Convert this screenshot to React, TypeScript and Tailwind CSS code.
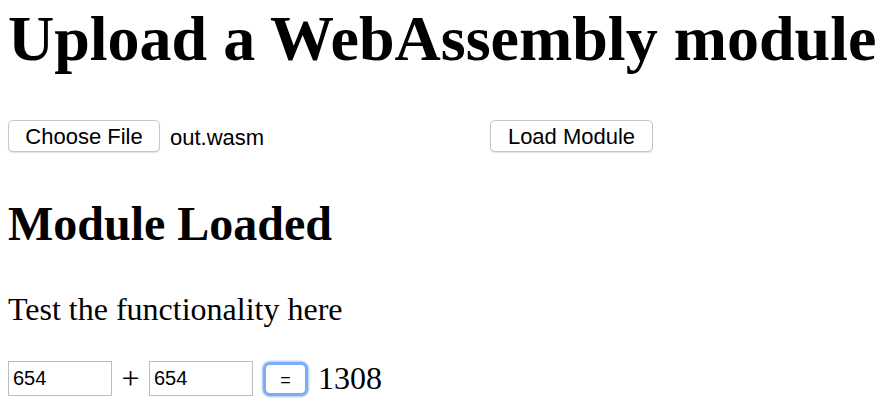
import React, { useState } from 'react';

const sans = "font-['Liberation_Sans',Arial,sans-serif]";

export default function App() {
  const [a, setA] = useState('654');
  const [b, setB] = useState('654');
  const [sum, setSum] = useState('1308');

  return (
    <div className="min-h-screen bg-white px-2 text-black font-['Liberation_Serif','Times_New_Roman',serif] text-[32px]">
      <h1 className="pt-[2px] text-[64px] leading-[74px] font-bold whitespace-nowrap">Upload a WebAssembly module</h1>

      <div className="mt-[44px] flex h-[32px] items-center">
        <div className="flex w-[482px] items-center">
          <button className={`${sans} h-[32px] w-[152px] rounded-[5px] border border-[#c6c6c6] bg-white pt-[2px] text-[22px] leading-none shadow-[0_1px_1px_rgba(0,0,0,0.12)]`}>
            Choose File
          </button>
          <span className={`${sans} ml-[10px] pt-[2px] text-[22px]`}>out.wasm</span>
        </div>
        <button className={`${sans} h-[32px] w-[163px] rounded-[5px] border border-[#c6c6c6] bg-white pt-[2px] text-[22px] leading-none shadow-[0_1px_1px_rgba(0,0,0,0.12)]`}>
          Load Module
        </button>
      </div>

      <h2 className="mt-[44px] text-[48px] leading-[55px] font-bold">Module Loaded</h2>

      <p className="mt-[40px] leading-[37px]">Test the functionality here</p>

      <div className="mt-[33px] flex h-[35px] items-center">
        <input
          value={a}
          onChange={(e) => setA(e.target.value)}
          className={`${sans} h-[35px] w-[104px] border border-[#bdbdbd] px-[4px] text-[20px] outline-none`}
        />
        <span className="w-[37px] text-center leading-[37px]">+</span>
        <input
          value={b}
          onChange={(e) => setB(e.target.value)}
          className={`${sans} h-[35px] w-[104px] border border-[#bdbdbd] px-[4px] text-[20px] outline-none`}
        />
        <button
          onClick={() => setSum(String(Number(a) + Number(b)))}
          className={`${sans} ml-[10px] h-[34px] w-[45px] rounded-[7px] border-[3px] border-[#7badf2] bg-white pt-[3px] text-[18px] leading-none shadow-[0_0_0_1.5px_#c2d8f8]`}
        >
          =
        </button>
        <span className="ml-[10px] leading-[37px]">{sum}</span>
      </div>
    </div>
  );
}
